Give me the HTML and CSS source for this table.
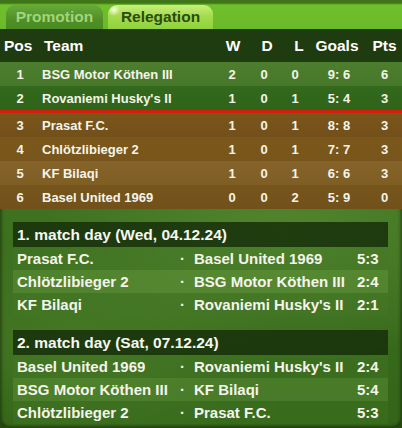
FILE: index.html
```html
<!DOCTYPE html>
<html>
<head>
<meta charset="utf-8">
<link rel="stylesheet" href="styles.css">
</head>
<body>
<div class="widget">
  <div class="tabs">
    <div class="tab">Promotion</div>
    <div class="tab active">Relegation</div>
  </div>
  <div class="standings">
    <div class="row head">
      <div class="c-pos">Pos</div><div class="c-team">Team</div><div class="c-w">W</div><div class="c-d">D</div><div class="c-l">L</div><div class="c-goals">Goals</div><div class="c-pts">Pts</div>
    </div>
    <div class="row g1">
      <div class="c-pos">1</div><div class="c-team">BSG Motor Köthen III</div><div class="c-w">2</div><div class="c-d">0</div><div class="c-l">0</div><div class="c-goals">9: 6</div><div class="c-pts">6</div>
    </div>
    <div class="row g2 cut">
      <div class="c-pos">2</div><div class="c-team">Rovaniemi Husky's II</div><div class="c-w">1</div><div class="c-d">0</div><div class="c-l">1</div><div class="c-goals">5: 4</div><div class="c-pts">3</div>
    </div>
    <div class="row b1">
      <div class="c-pos">3</div><div class="c-team">Prasat F.C.</div><div class="c-w">1</div><div class="c-d">0</div><div class="c-l">1</div><div class="c-goals">8: 8</div><div class="c-pts">3</div>
    </div>
    <div class="row b2">
      <div class="c-pos">4</div><div class="c-team">Chlötzlibieger 2</div><div class="c-w">1</div><div class="c-d">0</div><div class="c-l">1</div><div class="c-goals">7: 7</div><div class="c-pts">3</div>
    </div>
    <div class="row b3">
      <div class="c-pos">5</div><div class="c-team">KF Bilaqi</div><div class="c-w">1</div><div class="c-d">0</div><div class="c-l">1</div><div class="c-goals">6: 6</div><div class="c-pts">3</div>
    </div>
    <div class="row b4">
      <div class="c-pos">6</div><div class="c-team">Basel United 1969</div><div class="c-w">0</div><div class="c-d">0</div><div class="c-l">2</div><div class="c-goals">5: 9</div><div class="c-pts">0</div>
    </div>
  </div>
  <div class="matches">
    <section class="matchday">
      <div class="md-head">1. match day (Wed, 04.12.24)</div>
      <div class="match m1"><span class="home">Prasat F.C.</span><span class="sep">·</span><span class="away">Basel United 1969</span><span class="score">5:3</span></div>
      <div class="match m2"><span class="home">Chlötzlibieger 2</span><span class="sep">·</span><span class="away">BSG Motor Köthen III</span><span class="score">2:4</span></div>
      <div class="match m1"><span class="home">KF Bilaqi</span><span class="sep">·</span><span class="away">Rovaniemi Husky's II</span><span class="score">2:1</span></div>
    </section>
    <section class="matchday">
      <div class="md-head">2. match day (Sat, 07.12.24)</div>
      <div class="match m1"><span class="home">Basel United 1969</span><span class="sep">·</span><span class="away">Rovaniemi Husky's II</span><span class="score">2:4</span></div>
      <div class="match m2"><span class="home">BSG Motor Köthen III</span><span class="sep">·</span><span class="away">KF Bilaqi</span><span class="score">5:4</span></div>
      <div class="match m1"><span class="home">Chlötzlibieger 2</span><span class="sep">·</span><span class="away">Prasat F.C.</span><span class="score">5:3</span></div>
    </section>
  </div>
</div>
</body>
</html>
```

FILE: styles.css
```css
html, body {
  margin: 0;
  padding: 0;
  background: #27470f;
}
body {
  font-family: "Liberation Sans", Arial, sans-serif;
  font-weight: bold;
  color: #f4f4ec;
}
.widget {
  width: 402px;
  height: 428px;
  overflow: hidden;
  border-radius: 0 0 9px 9px;
  background:
    radial-gradient(ellipse 60% 30% at 70% 55%, rgba(120,170,70,0.35), rgba(120,170,70,0) 100%),
    radial-gradient(ellipse 50% 25% at 20% 80%, rgba(110,160,60,0.25), rgba(110,160,60,0) 100%),
    linear-gradient(#3a6a1c, #3e7220 50%, #336418);
  box-shadow: inset 3px 0 3px -1px rgba(0,0,0,0.3), inset -3px 0 3px -1px rgba(0,0,0,0.3), inset 0 -3px 3px -1px rgba(0,0,0,0.3);
}

/* tabs */
.tabs {
  height: 29px;
  box-sizing: border-box;
  padding: 5px 0 0 6px;
  display: flex;
  gap: 5px;
  align-items: flex-end;
  background: linear-gradient(#3f7418 0, #3f7418 3px, #6fc02c 5px, #6ab92a 100%);
}
.tab {
  height: 24px;
  box-sizing: border-box;
  border-radius: 9px 9px 0 0;
  font-size: 15.5px;
  line-height: 24px;
  text-align: center;
}
.tab:first-child {
  width: 97px;
  background: linear-gradient(#67a93a, #4f9126 60%, #4a8a22);
  color: #a4d47a;
}
.tab.active {
  width: 105px;
  background:
    radial-gradient(circle at 6px 5px, rgba(255,255,230,0.9) 0, rgba(255,255,230,0) 6px),
    linear-gradient(#c9ef7a, #a3dc4e 45%, #8fd23c);
  color: #2d4a10;
}

/* standings */
.row {
  display: grid;
  grid-template-columns: 40px 175px 34px 30px 32px 56px 35px;
  align-items: center;
  height: 24px;
  font-size: 13px;
}
.row > div {
  text-align: center;
  white-space: nowrap;
}
.row > .c-team {
  text-align: left;
  padding-left: 2px;
}
.row.head {
  height: 33px;
  font-size: 15.5px;
  background: #1f3b10;
  color: #ffffff;
}
.row.head .c-pos { text-align: left; padding-left: 4px; }
.row.head .c-team { padding-left: 4px; }
.row.head .c-w { padding-left: 2px; }
.row.head .c-d { padding-left: 6px; }
.row.head .c-l { padding-left: 8px; }
.row.head .c-goals { padding-right: 4px; }
.g1 { background: linear-gradient(#4d7e2e, #477829); }
.g2 { background: linear-gradient(#33691c, #2f6419); }
.cut { border-bottom: 3px solid #cf200c; }
.b1 { background: linear-gradient(#7a561a, #73501a); }
.b2 { background: linear-gradient(#7b571b, #78551a); }
.b3 { background: linear-gradient(#85632a, #7f5e24); }
.b4 { background: linear-gradient(#77561d, #71501a); }

/* matches */
.matches {
  display: flex;
  flex-direction: column;
  gap: 14px;
  padding: 13px 14px 0 13px;
}
.md-head {
  height: 25px;
  line-height: 25px;
  padding-left: 4px;
  font-size: 15.5px;
  background: rgba(22,48,10,0.85);
  color: #f6f6f0;
}
.match {
  display: grid;
  grid-template-columns: 164px 13px 162px 36px;
  height: 23px;
  align-items: center;
  font-size: 15px;
  white-space: nowrap;
}
.match.m1 { background: rgba(70,120,40,0.35); }
.match.m2 { background: rgba(110,160,70,0.35); }
.home { padding-left: 4px; }
.sep { padding-left: 3px; }
.away { padding-left: 4px; }
.score { padding-left: 5px; }
```
